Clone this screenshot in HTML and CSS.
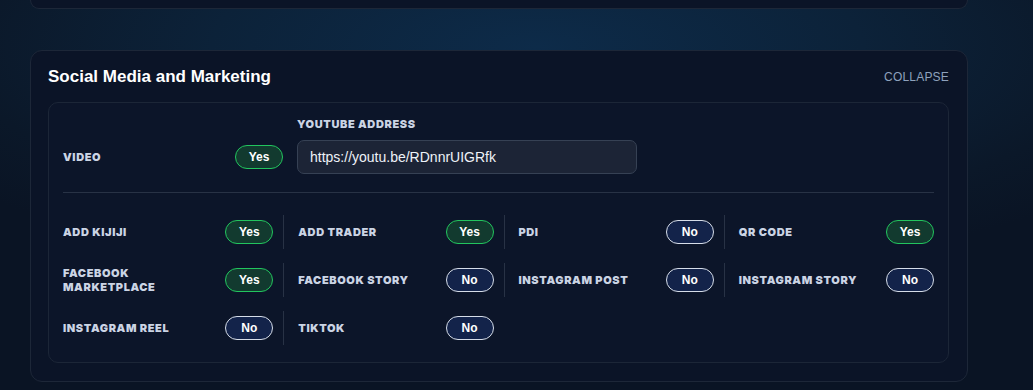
FILE: index.html
```html
<!DOCTYPE html>
<html>
<head>
<meta charset="UTF-8">
<meta name="viewport" content="initial-scale=1, maximum-scale=1">
<title>Social Media and Marketing</title>
<link rel="stylesheet" href="styles.css">
</head>
<body>
    <div class="page">
        <div class="card card-prev"></div>

        <div class="card">
            <div class="card-head">
                <h2 class="card-title">Social Media and Marketing</h2>
                <a class="collapse" href="#">Collapse</a>
            </div>
            <div class="panel">
                <div class="video-row">
                    <div class="opt opt-video">
                        <span class="opt-label">Video</span>
                        <span class="pill yes">Yes</span>
                    </div>
                    <div class="field">
                        <label class="field-label">Youtube Address</label>
                        <input class="field-input" type="text" value="https://youtu.be/RDnnrUIGRfk">
                    </div>
                </div>
                <div class="divider"></div>
                <div class="opt-grid">
                    <div class="opt"><span class="opt-label">Add Kijiji</span><span class="pill yes">Yes</span></div>
                    <div class="opt"><span class="opt-label">Add Trader</span><span class="pill yes">Yes</span></div>
                    <div class="opt"><span class="opt-label">PDI</span><span class="pill no">No</span></div>
                    <div class="opt"><span class="opt-label">QR Code</span><span class="pill yes">Yes</span></div>
                    <div class="opt"><span class="opt-label">Facebook<br>Marketplace</span><span class="pill yes">Yes</span></div>
                    <div class="opt"><span class="opt-label">Facebook Story</span><span class="pill no">No</span></div>
                    <div class="opt"><span class="opt-label">Instagram Post</span><span class="pill no">No</span></div>
                    <div class="opt"><span class="opt-label">Instagram Story</span><span class="pill no">No</span></div>
                    <div class="opt"><span class="opt-label">Instagram Reel</span><span class="pill no">No</span></div>
                    <div class="opt"><span class="opt-label">TikTok</span><span class="pill no">No</span></div>
                </div>
            </div>
        </div>
    </div>
</body>
</html>
```

FILE: styles.css
```css
* { padding: 0; margin: 0; box-sizing: border-box; }
html, body {
    width: 100%;
    height: 100%;
}
body {
    overflow: hidden;
    font-family: "Liberation Sans", Arial, sans-serif;
    color: #fff;
    background: radial-gradient(ellipse 70% 60% at 52% 12%, #0d2b49 0%, #0c2239 45%, #0b1829 80%, #0a1424 100%);
}
.page {
    padding: 0 65px 0 30px;
}
.card {
    background: #0b1427;
    border: 1px solid #1d2738;
    border-radius: 12px;
    padding: 16px 18px 18px 17px;
}
.card-prev {
    height: 9px;
    padding: 0;
    border-top: 0;
    border-radius: 0 0 12px 12px;
    margin-bottom: 41px;
}
.card-head {
    display: flex;
    justify-content: space-between;
    align-items: center;
    height: 20px;
    margin-bottom: 15px;
}
.card-title {
    font-size: 17px;
    font-weight: bold;
    color: #fff;
}
.collapse {
    font-size: 12px;
    letter-spacing: 0.2px;
    text-transform: uppercase;
    color: #8ea2bd;
    text-decoration: none;
}
.panel {
    background: #0c1529;
    border: 1px solid #1c2637;
    border-radius: 10px;
    padding: 14px 14px 17px 14px;
}
.video-row {
    display: flex;
    align-items: flex-end;
    gap: 14px;
}
.field {
    display: flex;
    flex-direction: column;
}
.field-label,
.opt-label {
    font-family: Inter, "DejaVu Sans", sans-serif;
    font-size: 11px;
    font-weight: 900;
    letter-spacing: 0.6px;
    line-height: 14px;
    text-transform: uppercase;
    color: #cbd4e4;
}
.field-label {
    margin-bottom: 9px;
}
.field-input {
    width: 340px;
    height: 34px;
    padding: 0 12px;
    font-family: "Liberation Sans", Arial, sans-serif;
    font-size: 14px;
    color: #eef2f8;
    background: #1c2436;
    border: 1px solid #364154;
    border-radius: 7px;
    outline: none;
}
.divider {
    height: 1px;
    background: #283245;
    margin: 18px 0 22px;
}
.opt-grid {
    display: grid;
    grid-template-columns: repeat(4, 1fr);
    row-gap: 14px;
    margin-right: -10px;
}
.opt {
    display: flex;
    align-items: center;
    justify-content: space-between;
    min-height: 34px;
    padding: 0 10px 0 14px;
    border-left: 1px solid #283245;
}
.opt-grid .opt:nth-child(4n+1),
.video-row .opt-video {
    padding-left: 0;
    border-left: 0;
}
.video-row .opt-video {
    width: 220px;
    padding-right: 0;
}
.pill {
    flex: none;
    width: 48px;
    height: 24px;
    border-radius: 12px;
    display: flex;
    align-items: center;
    justify-content: center;
    font-family: "Liberation Sans", Arial, sans-serif;
    font-size: 12px;
    font-weight: bold;
    color: #fff;
}
.pill.yes {
    background: #123a2f;
    border: 1.5px solid #22c55e;
}
.pill.no {
    background: #13234a;
    border: 1.5px solid #d6dde8;
}
```
